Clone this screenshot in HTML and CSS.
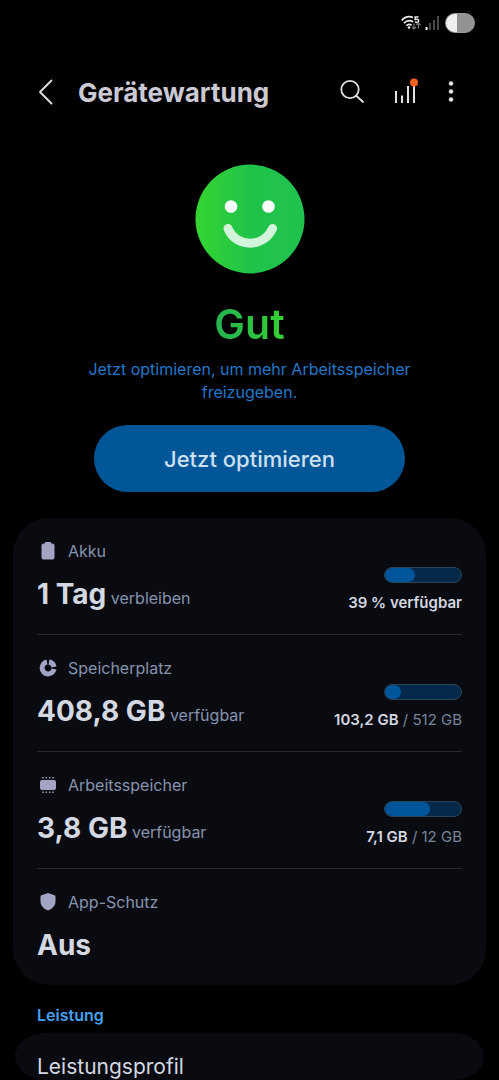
FILE: index.html
```html
<!DOCTYPE html>
<html lang="de">
<head>
  <meta charset="UTF-8" />
  <meta name="viewport" content="width=device-width, initial-scale=1.0" />
  <title>Gerätewartung</title>
  <link rel="stylesheet" href="styles.css">
</head>
<body>

  <div class="statusbar">
    <svg width="20" height="16" viewBox="0 0 20 16" fill="none" stroke="#eee" stroke-width="1.700">
      <path d="M0.700 5.500C4 1.600 8.500 1 12 2.600" />
      <path d="M3 8.200C5.500 5.400 9 5 12.200 6.800" />
      <path d="M5.400 10.700C7 9 9 9 10.600 10.400" />
      <circle cx="8" cy="12.500" r="1.300" fill="#eee" stroke="none" />
      <path d="M17.500 2h-3.300v2.600c3-.8 3.600.4 3.400 1.500c-.3 1.400-2.200 1.600-3.600.9" stroke-width="1.500" />
      <path d="M13 8.500v5.500m-2-2l2 2l2-2M17.500 13.500V8m-2 2l2-2l2 2" stroke="#777" stroke-width="1.200" />
    </svg>
    <svg width="14" height="14" viewBox="0 0 14 14">
      <path d="M1.500 11v3" stroke="#fff" stroke-width="2" />
      <path d="M5 7v7M9 4v10M13 0v14" stroke="#666" stroke-width="1.400" />
    </svg>
    <span class="battery"></span>
  </div>

  <header class="appbar">
    <button class="btn-icon" aria-label="Zurück">
      <svg width="16" height="26" viewBox="0 0 16 26" fill="none" stroke="#e2e2e6" stroke-width="1.800" stroke-linecap="round" stroke-linejoin="round">
        <path d="M13.500 1.500L2 13l11.500 11.500" />
      </svg>
    </button>
    <h1>Gerätewartung</h1>
    <button class="btn-icon" aria-label="Suchen">
      <svg width="26" height="26" viewBox="0 0 26 26" fill="none" stroke="#e2e2e6" stroke-width="1.800" stroke-linecap="round">
        <circle cx="10" cy="10.500" r="8.700" />
        <path d="M16.500 17L23 23" />
      </svg>
    </button>
    <button class="btn-icon btn-chart" aria-label="Diagramm">
      <svg width="26" height="26" viewBox="0 0 26 26" fill="none" stroke="#e2e2e6" stroke-width="2">
        <path d="M4 12v12M10 16.500V24M16 7v17M22 4v20" />
        <circle cx="22" cy="3.500" r="4" fill="#f2621f" stroke="none" />
      </svg>
    </button>
    <button class="btn-icon" aria-label="Weitere Optionen">
      <svg width="6" height="22" viewBox="0 0 6 22" fill="#e2e2e6">
        <circle cx="3" cy="2.500" r="2.200" />
        <circle cx="3" cy="10.500" r="2.200" />
        <circle cx="3" cy="18.500" r="2.200" />
      </svg>
    </button>
  </header>

  <section class="status">
    <svg class="face" width="110" height="110" viewBox="0 0 110 110">
      <defs>
        <linearGradient id="gruen" x1="0" x2="1" y1="0" y2="0">
          <stop offset="0" stop-color="#34d530" />
          <stop offset="0.500" stop-color="#20c349" />
          <stop offset="1" stop-color="#20c24f" />
        </linearGradient>
      </defs>
      <circle cx="55" cy="55" r="54.500" fill="url(#gruen)" />
      <circle cx="36" cy="42.500" r="6.300" fill="#fff" />
      <circle cx="73.500" cy="42.500" r="6.300" fill="#fff" />
      <path d="M33 64.500C41 84 69 84 77.500 64.500" fill="none" stroke="#d2f4db" stroke-width="9" stroke-linecap="round" />
    </svg>
    <h2>Gut</h2>
    <p>Jetzt optimieren, um mehr Arbeitsspeicher freizugeben.</p>
    <button class="btn-optimieren">Jetzt optimieren</button>
  </section>

  <main class="card">
    <div class="row">
      <div>
        <div class="label">
          <svg width="22" height="22" viewBox="0 0 22 22" fill="#a1a5c3">
            <path d="M8 2h6v1.500h1.500a2 2 0 0 1 2 2v12a2 2 0 0 1-2 2h-9a2 2 0 0 1-2-2v-12a2 2 0 0 1 2-2H8z" />
          </svg>
          Akku
        </div>
        <div class="value"><strong>1 Tag</strong> verbleiben</div>
      </div>
      <div class="usage">
        <div class="bar"><div class="fill" style="width: 39%"></div></div>
        <div><b>39 % verfügbar</b></div>
      </div>
    </div>

    <div class="row">
      <div>
        <div class="label">
          <svg width="22" height="22" viewBox="0 0 22 22" fill="none" stroke="#a1a5c3" stroke-width="5">
            <path d="M10 5a6 6 0 1 0 7 7" />
            <path d="M12 5a6 6 0 0 1 5 5" />
          </svg>
          Speicherplatz
        </div>
        <div class="value"><strong>408,8 GB</strong> verfügbar</div>
      </div>
      <div class="usage">
        <div class="bar"><div class="fill" style="width: 21%"></div></div>
        <div><b>103,2 GB</b> / 512 GB</div>
      </div>
    </div>

    <div class="row">
      <div>
        <div class="label">
          <svg width="22" height="22" viewBox="0 0 22 22" fill="#a1a5c3">
            <rect x="3" y="6" width="16" height="10" rx="2" />
            <path d="M6 3v1.500M9.300 3v1.500M12.700 3v1.500M16 3v1.500M6 17.500v1.500M9.300 17.500v1.500M12.700 17.500v1.500M16 17.500v1.500" stroke="#a1a5c3" stroke-width="1.400" />
          </svg>
          Arbeitsspeicher
        </div>
        <div class="value"><strong>3,8 GB</strong> verfügbar</div>
      </div>
      <div class="usage">
        <div class="bar"><div class="fill" style="width: 59%"></div></div>
        <div><b>7,1 GB</b> / 12 GB</div>
      </div>
    </div>

    <div class="row">
      <div>
        <div class="label">
          <svg width="22" height="22" viewBox="0 0 22 22" fill="#a1a5c3">
            <path d="M11 2l6.500 2.200q1 .3 1 1.300v5c0 4-3 7.300-7.500 9c-4.500-1.700-7.500-5-7.500-9v-5q0-1 1-1.300z" />
          </svg>
          App-Schutz
        </div>
        <div class="value"><strong>Aus</strong></div>
      </div>
    </div>
  </main>

  <h3>Leistung</h3>
  <a class="profil" href="#">Leistungsprofil</a>

</body>
</html>
```

FILE: styles.css
```css
* {
  box-sizing: border-box;
}

body {
  margin: 0;
  background: #000;
  color: #d3d8e2;
  font-family: Inter, "Noto Sans", sans-serif;
  font-size: 16px;
}

h1, h2, h3, p {
  margin: 0;
}

svg {
  display: block;
  flex-shrink: 0;
  overflow: visible;
}

button {
  font-family: inherit;
  border: none;
  cursor: pointer;
}

.statusbar {
  display: flex;
  justify-content: flex-end;
  align-items: center;
  gap: 4px;
  height: 46px;
  padding-right: 24px;
}

.battery {
  width: 30px;
  height: 20px;
  margin-left: 2px;
  border: 1px solid #999;
  border-radius: 10px;
  background: linear-gradient(to right, #eee 38%, #929292 38%);
}

.appbar {
  display: flex;
  align-items: center;
  height: 92px;
  padding: 0 32px 0 30px;
}

.appbar h1 {
  flex: 1;
  padding-left: 16px;
  color: #cbcad4;
  font-size: 26px;
  font-weight: 700;
}

.btn-icon {
  display: flex;
  justify-content: center;
  align-items: center;
  width: 32px;
  height: 40px;
  padding: 0;
  background: none;
}

.btn-chart {
  margin: 0 14px 0 20px;
}

.status {
  display: flex;
  flex-direction: column;
  align-items: center;
  padding: 26px 64px;
  text-align: center;
}

.status h2 {
  margin-top: 26px;
  background: linear-gradient(to right, #24b353, #35cf30);
  background-clip: text;
  -webkit-background-clip: text;
  color: transparent;
  font-size: 41px;
  font-weight: 600;
  line-height: 48px;
}

.status p {
  margin-top: 10px;
  color: #2377c8;
  line-height: 23px;
}

.btn-optimieren {
  width: 84%;
  height: 67px;
  margin-top: 21px;
  border-radius: 34px;
  background: #015697;
  color: #cfe0f2;
  font-size: 22px;
  font-weight: 500;
}

.card {
  margin: 0 13px;
  padding: 0 24px;
  border-radius: 36px;
  background: #0a0b10;
}

.row {
  display: flex;
  justify-content: space-between;
  height: 117px;
  padding-top: 22px;
  border-bottom: 1px solid #26282c;
}

.row:last-child {
  height: 116px;
  border-bottom: none;
}

.label {
  display: flex;
  align-items: center;
  gap: 9px;
  height: 22px;
  color: #8593ae;
}

.value {
  margin-top: 14px;
  color: #8593ae;
  line-height: 36px;
}

.value strong {
  color: #d3d8e2;
  font-size: 28px;
  font-weight: 700;
}

.usage {
  display: flex;
  flex-direction: column;
  align-items: flex-end;
  padding-top: 27px;
  color: #75859b;
  font-size: 15px;
  line-height: 20px;
}

.usage b {
  color: #d3d8e2;
  font-weight: 600;
}

.bar {
  width: 78px;
  height: 16px;
  margin-bottom: 10px;
  border: 1px solid #2b4358;
  border-radius: 8px;
  background: #04294a;
  overflow: hidden;
}

.fill {
  height: 100%;
  border-radius: 8px;
  background: #01569b;
}

h3 {
  padding: 20px 37px 8px;
  color: #46a1f0;
  font-size: 16px;
  font-weight: 600;
  line-height: 20px;
}

.profil {
  display: block;
  height: 47px;
  margin: 0 15px;
  padding: 20px 22px 0;
  border-radius: 32px / 24px;
  background: #0a0b10;
  color: #d3d8e2;
  font-size: 21px;
  line-height: 27px;
  text-decoration: none;
}
```
